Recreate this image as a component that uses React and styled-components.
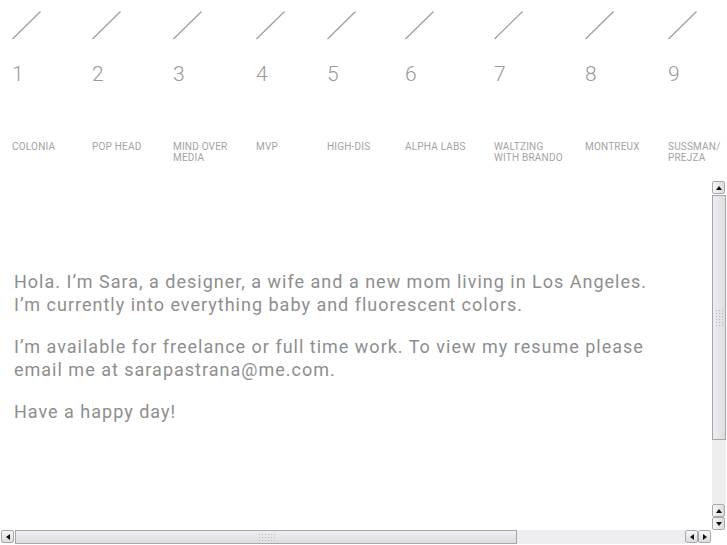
import styled, { createGlobalStyle } from "styled-components";

const GlobalStyle = createGlobalStyle`
  html, body {
    margin: 0;
    padding: 0;
    background: #ffffff;
  }
  body {
    font-family: Roboto, "Liberation Sans", sans-serif;
    color: #8c8c8c;
    overflow: hidden;
  }
`;

const Page = styled.div`
  width: 727px;
  height: 545px;
  display: flex;
  flex-direction: column;
`;

const Nav = styled.nav`
  display: flex;
  height: 181px;
  padding-left: 12px;
  box-sizing: border-box;
`;

const Project = styled.div`
  width: ${(p) => p.$w}px;
  flex-shrink: 0;
  padding-top: 10px;
  display: flex;
  flex-direction: column;
`;

const Slash = styled.svg`
  display: block;
  width: 30px;
  height: 30px;
`;

const Number = styled.div`
  margin-top: 22px;
  font-size: 21px;
  line-height: 24px;
  color: #9a9a9a;
  font-weight: 300;
`;

const Label = styled.div`
  margin-top: 55px;
  font-size: 10px;
  line-height: 11px;
  letter-spacing: 0.2px;
  color: #a3a3a3;
  text-transform: uppercase;
`;

const Pane = styled.div`
  flex: 1;
  display: grid;
  grid-template-columns: 1fr 15px;
  grid-template-rows: 1fr 15px;
`;

const Content = styled.div`
  overflow: hidden;
  padding: 89px 0 0 14px;
`;

const Para = styled.p`
  margin: 0 0 19px;
  font-size: 18px;
  line-height: 23px;
  letter-spacing: 1px;
  white-space: nowrap;
  color: #8e8e8e;
`;

const VBar = styled.div`
  display: flex;
  flex-direction: column;
  width: 14px;
  margin-right: 1px;
`;

const HBar = styled.div`
  display: flex;
  height: 14px;
  padding-left: 1px;
  padding-right: 1px;
`;

const Arrow = styled.div`
  flex: 0 0 13px;
  width: 13px;
  height: 13px;
  box-sizing: border-box;
  border: 1px solid #a9a9a9;
  border-radius: 2px;
  background: linear-gradient(${(p) => (p.$h ? "180deg" : "90deg")}, #f7f7f9, #dcdce0);
  display: flex;
  align-items: center;
  justify-content: center;
  &::after {
    content: "";
    width: 0;
    height: 0;
    ${(p) =>
      p.$dir === "up" &&
      "border-left: 3px solid transparent; border-right: 3px solid transparent; border-bottom: 4px solid #111;"}
    ${(p) =>
      p.$dir === "down" &&
      "border-left: 3px solid transparent; border-right: 3px solid transparent; border-top: 4px solid #111;"}
    ${(p) =>
      p.$dir === "left" &&
      "border-top: 3px solid transparent; border-bottom: 3px solid transparent; border-right: 4px solid #111;"}
    ${(p) =>
      p.$dir === "right" &&
      "border-top: 3px solid transparent; border-bottom: 3px solid transparent; border-left: 4px solid #111;"}
  }
`;

const Thumb = styled.div`
  flex: 0 0 ${(p) => p.$size}px;
  box-sizing: border-box;
  border: 1px solid #a6a6a6;
  background: linear-gradient(${(p) => (p.$h ? "180deg" : "90deg")}, #eeeef2, #dddde2);
  display: flex;
  align-items: center;
  justify-content: ${(p) => (p.$h ? "flex-start" : "center")};
  padding-left: ${(p) => (p.$h ? "242px" : "0")};
  margin: ${(p) => (p.$h ? "0 0 0 1px" : "1px 0 0")};
`;

const Grip = styled.div`
  width: ${(p) => (p.$h ? "18px" : "8px")};
  height: ${(p) => (p.$h ? "8px" : "18px")};
  background-image: radial-gradient(circle, #b9b9bd 0.8px, transparent 1px);
  background-size: 3px 3px;
`;

const Track = styled.div`
  flex: 1;
  background-color: #f3f3f5;
  background-image: radial-gradient(circle, #e6e6e9 0.6px, transparent 0.8px);
  background-size: 2px 2px;
`;

const Corner = styled.div``;

const projects = [
  { n: 1, label: ["Colonia"], w: 80 },
  { n: 2, label: ["Pop Head"], w: 81 },
  { n: 3, label: ["Mind Over", "Media"], w: 83 },
  { n: 4, label: ["MVP"], w: 71 },
  { n: 5, label: ["High-Dis"], w: 78 },
  { n: 6, label: ["Alpha Labs"], w: 89 },
  { n: 7, label: ["Waltzing", "with Brando"], w: 91 },
  { n: 8, label: ["Montreux"], w: 83 },
  { n: 9, label: ["Sussman/", "Prejza"], w: 60 },
];

export default function App() {
  return (
    <Page>
      <GlobalStyle />
      <Nav>
        {projects.map((p) => (
          <Project key={p.n} $w={p.w}>
            <Slash viewBox="0 0 30 30">
              <line x1="0.5" y1="29" x2="28.5" y2="1.5" stroke="#9c9c9c" strokeWidth="1.2" />
            </Slash>
            <Number>{p.n}</Number>
            <Label>
              {p.label.map((l, i) => (
                <div key={i}>{l}</div>
              ))}
            </Label>
          </Project>
        ))}
      </Nav>
      <Pane>
        <Content>
          <Para>
            Hola. I’m Sara, a designer, a wife and a new mom living in Los Angeles.
            <br />
            I’m currently into everything baby and fluorescent colors.
          </Para>
          <Para>
            I’m available for freelance or full time work. To view my resume please
            <br />
            email me at sarapastrana@me.com.
          </Para>
          <Para>Have a happy day!</Para>
        </Content>
        <VBar>
          <Arrow $dir="up" />
          <Thumb $size={245}>
            <Grip />
          </Thumb>
          <Track />
          <Arrow $dir="up" />
          <Arrow $dir="down" />
        </VBar>
        <HBar>
          <Arrow $h $dir="left" />
          <Thumb $h $size={502}>
            <Grip $h />
          </Thumb>
          <Track />
          <Arrow $h $dir="left" />
          <Arrow $h $dir="right" />
        </HBar>
        <Corner />
      </Pane>
    </Page>
  );
}
